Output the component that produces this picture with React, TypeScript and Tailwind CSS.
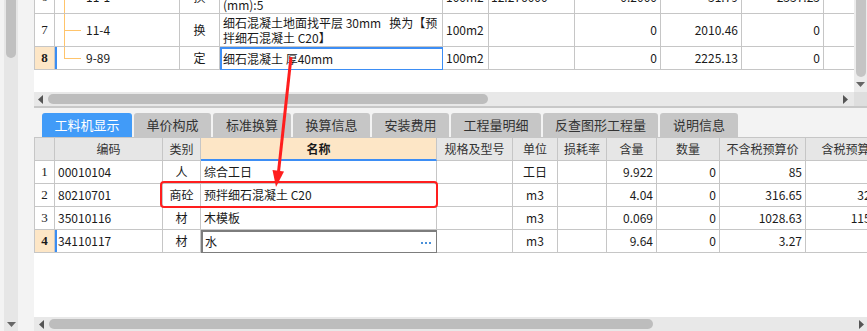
import type { ReactNode } from "react";

const FONT = { fontFamily: '"Noto Sans CJK SC", "Liberation Sans", sans-serif' };

const cell =
  "relative flex items-center overflow-hidden whitespace-nowrap border-r border-b border-[#c6c6c6] text-[12px] text-[#1a1a1a]";
const num = "justify-center font-['Liberation_Serif'] text-[13px]";
const right = "justify-end pr-[3px]";
const center = "justify-center";

const topCols =
  "grid grid-cols-[21px_125px_40px_223px_46px_86px_86px_81px_82px_80px]";
const lowCols =
  "grid grid-cols-[21px_108px_38px_236px_76px_45px_49px_50px_63px_86px_92px]";

const C = ({ className = "", children }: { className?: string; children?: ReactNode }) => (
  <div className={cell + " " + className}>{children}</div>
);

// orange tree connector drawn inside the code column
const Tree = ({ code, last }: { code: string; last?: boolean }) => (
  <>
    <span
      className={
        "absolute left-[9px] top-0 w-px bg-[#ffc46b] " + (last ? "h-1/2" : "bottom-0")
      }
    />
    <span className="absolute left-[9px] top-1/2 h-px w-[17px] bg-[#ffc46b]" />
    <span className="pl-[31px]">{code}</span>
  </>
);

const TriLeft = () => (
  <svg width="6" height="9" viewBox="0 0 6 9">
    <polygon points="5,0 5,9 0,4.5" fill="#555" />
  </svg>
);
const TriRight = () => (
  <svg width="6" height="9" viewBox="0 0 6 9">
    <polygon points="1,0 1,9 6,4.5" fill="#555" />
  </svg>
);
const TriDown = () => (
  <svg width="9" height="5" viewBox="0 0 9 5">
    <polygon points="0,0 9,0 4.5,5" fill="#666" />
  </svg>
);

const tabs = [
  { label: "工料机显示", w: "w-[90px]", active: true },
  { label: "单价构成", w: "w-[77px]" },
  { label: "标准换算", w: "w-[78px]" },
  { label: "换算信息", w: "w-[77px]" },
  { label: "安装费用", w: "w-[77px]" },
  { label: "工程量明细", w: "w-[90px]" },
  { label: "反查图形工程量", w: "w-[115px]" },
  { label: "说明信息", w: "w-[78px]" },
];

const headers = [
  "",
  "编码",
  "类别",
  "名称",
  "规格及型号",
  "单位",
  "损耗率",
  "含量",
  "数量",
  "不含税预算价",
  "含税预算价",
];

const rows = [
  { n: "1", code: "00010104", kind: "人", name: "综合工日", unit: "工日", qty: "9.922", amt: "0", price: "85", tax: "85" },
  { n: "2", code: "80210701", kind: "商砼", name: "预拌细石混凝土 C20", unit: "m3", qty: "4.04", amt: "0", price: "316.65", tax: "326.15" },
  { n: "3", code: "35010116", kind: "材", name: "木模板", unit: "m3", qty: "0.069", amt: "0", price: "1028.63", tax: "1156.42" },
  { n: "4", code: "34110117", kind: "材", name: "水", unit: "m3", qty: "9.64", amt: "0", price: "3.27", tax: "3.3", sel: true },
];

export default function App() {
  return (
    <div className="relative flex h-[331px] w-[867px] overflow-hidden bg-[#f3f3f3]" style={FONT}>
      {/* left side strip with its own scrollbar */}
      <div className="flex h-full w-[34px] shrink-0 bg-[#f3f3f3]">
        <div className="ml-[4px] flex h-full w-[14px] flex-col items-center justify-between bg-[#e6e6e6] pb-[4px]">
          <div className="h-[58px] w-[10px] rounded-b-full bg-[#c0c0c0]" />
          <TriDown />
        </div>
      </div>

      <div className="flex min-w-0 flex-1 flex-col">
        {/* upper grid */}
        <div className="flex h-[106px] bg-white">
          <div className="flex min-w-0 flex-1 flex-col">
            <div className="h-[92px] overflow-hidden">
              <div className={topCols + " -mt-[19px] h-[33px]"}>
                <C className={num + " border-l"}>6</C>
                <C><Tree code="11-1" /></C>
                <C className={center}>换</C>
                <C className="flex-col items-start justify-center pl-[3px] leading-[15px]">
                  <span>细石混凝土找平层 厚度</span>
                  <span>(mm):5</span>
                </C>
                <C className="pl-[3px]">100m2</C>
                <C className="pl-[2px]">12.276000</C>
                <C className={right}>0.2000</C>
                <C className={right}>31.79</C>
                <C className={right}>2337.25</C>
                <C className={right}>3</C>
              </div>
              <div className={topCols + " h-[33px]"}>
                <C className={num + " border-l"}>7</C>
                <C><Tree code="11-4" /></C>
                <C className={center}>换</C>
                <C className="flex-col items-start justify-center pl-[3px] leading-[15px]">
                  <span>细石混凝土地面找平层 30mm&nbsp;&nbsp;&nbsp;换为【预</span>
                  <span>拌细石混凝土 C20】</span>
                </C>
                <C className="pl-[3px]">100m2</C>
                <C />
                <C className={right}>0</C>
                <C className={right}>2010.46</C>
                <C className={right}>0</C>
                <C className={right}>3</C>
              </div>
              <div className={topCols + " h-[23px]"}>
                <C className={num + " border-l bg-[#fde6c6] font-bold"}>8</C>
                <C>
                  <span className="absolute left-0 top-0 bottom-0 w-[2px] bg-[#3b8df2]" />
                  <Tree code="9-89" last />
                </C>
                <C className={center}>定</C>
                <C className="border-2 border-[#3d8ef5]! pl-[1px]">细石混凝土 厚40mm</C>
                <C className="pl-[3px]">100m2</C>
                <C />
                <C className={right}>0</C>
                <C className={right}>2225.13</C>
                <C className={right}>0</C>
                <C className={right}>3</C>
              </div>
            </div>
            {/* horizontal scrollbar */}
            <div className="flex h-[14px] items-center gap-[4px] bg-[#e8e8e8] pl-[4px] pr-[6px]">
              <TriLeft />
              <div className="h-[10px] w-[440px] rounded-full bg-[#bdbdbd]" />
              <div className="flex-1" />
              <TriRight />
            </div>
          </div>
          {/* vertical scrollbar */}
          <div className="flex w-[13px] flex-col bg-[#ececec]">
            <div className="flex h-[92px] flex-col items-center">
              <div className="h-[77px] w-[10px] rounded-b-full bg-[#c4c4c4]" />
              <div className="mt-[5px]">
                <TriDown />
              </div>
            </div>
            <div className="h-[14px] bg-[#dedede]" />
          </div>
        </div>

        <div className="h-[2px] bg-[#c8c8c8]" />

        {/* tabs */}
        <div className="flex h-[29px] items-end gap-[2px] pl-[8px]">
          {tabs.map((t) => (
            <div
              key={t.label}
              className={
                "flex h-[24px] items-center justify-center rounded-t-[3px] text-[13px] " +
                t.w +
                (t.active ? " bg-[#419bf8] text-white" : " bg-[#c6c6c6] text-[#333]")
              }
            >
              {t.label}
            </div>
          ))}
        </div>

        {/* lower grid */}
        <div className="flex-1 overflow-hidden bg-white">
          <div className={lowCols + " h-[24px] border-t border-[#c6c6c6]"}>
            {headers.map((h, i) => (
              <C
                key={i}
                className={
                  center +
                  (i === 0 ? " border-l" : "") +
                  (i === 3
                    ? " border-b-2 border-b-[#3d8ef5]! bg-[#fde6c6] font-bold"
                    : " bg-[#e6e6e6] text-[#333]")
                }
              >
                {h}
              </C>
            ))}
          </div>
          {rows.map((r) => (
            <div key={r.n} className={lowCols + " h-[23px]"}>
              <C className={num + " border-l" + (r.sel ? " bg-[#fde6c6] font-bold" : "")}>{r.n}</C>
              <C className="pl-[3px]">
                {r.sel && <span className="absolute left-0 top-0 bottom-0 w-[2px] bg-[#3b8df2]" />}
                {r.code}
              </C>
              <C className={center}>{r.kind}</C>
              <C className={r.sel ? "border-2 border-[#7d7d7d]! pl-[2px] pr-[5px]" : "pl-[3px]"}>
                <span className="flex-1">{r.name}</span>
                {r.sel && (
                  <span className="mt-[2px] flex gap-[2px]">
                    <span className="h-[2px] w-[2px] bg-[#4a90d9]" />
                    <span className="h-[2px] w-[2px] bg-[#4a90d9]" />
                    <span className="h-[2px] w-[2px] bg-[#4a90d9]" />
                  </span>
                )}
              </C>
              <C />
              <C className={center}>{r.unit}</C>
              <C />
              <C className={right}>{r.qty}</C>
              <C className={right}>{r.amt}</C>
              <C className={right}>{r.price}</C>
              <C className={right}>{r.tax}</C>
            </div>
          ))}
        </div>

        {/* bottom horizontal scrollbar */}
        <div className="flex h-[14px] items-center gap-[4px] bg-[#e8e8e8] pl-[5px] pr-[3px]">
          <TriLeft />
          <div className="h-[10px] w-[604px] rounded-full bg-[#bdbdbd]" />
          <div className="flex-1" />
          <TriRight />
        </div>
      </div>

      {/* red annotation */}
      <div className="pointer-events-none absolute left-[160px] top-[181px] h-[27px] w-[278px] rounded-[4px] border-2 border-[#ff1e1e]" />
      <svg
        className="pointer-events-none absolute left-0 top-0"
        width="867"
        height="331"
        viewBox="0 0 867 331"
      >
        <line x1="291" y1="57" x2="278.5" y2="172" stroke="#ff1e1e" strokeWidth="3" />
        <polygon points="276,187 272.5,170 284,171.5" fill="#ff1e1e" />
      </svg>
    </div>
  );
}
